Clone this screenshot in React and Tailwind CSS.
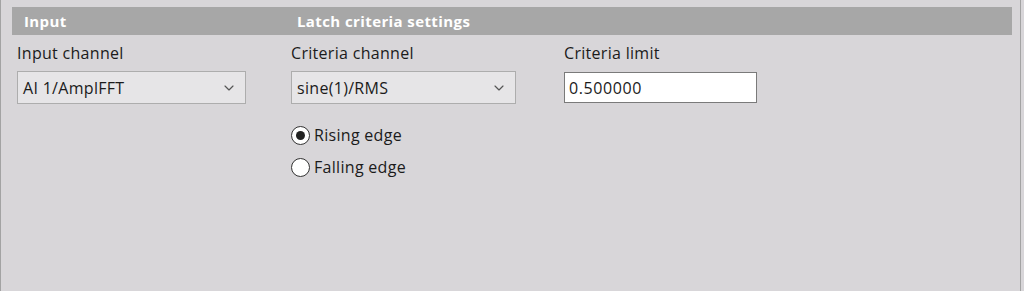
import { ChevronDown } from 'lucide-react';

function Select({ value, width }) {
  return (
    <div
      className={`flex items-center justify-between h-[33px] bg-[#e6e5e7] border border-[#adadad] pl-[5px] pr-[8px] ${width}`}
    >
      <span className="text-[16px] tracking-[0.3px] text-[#1b1b1b]">{value}</span>
      <ChevronDown className="w-[16px] h-[16px] text-[#555]" strokeWidth={1.75} />
    </div>
  );
}

function Radio({ label, checked }) {
  return (
    <div className="flex items-center gap-[4px] h-[32px]">
      <span className="w-[19px] h-[19px] rounded-full bg-white border border-[#333] flex items-center justify-center">
        {checked && <span className="w-[9px] h-[9px] rounded-full bg-[#222]" />}
      </span>
      <span className="text-[16px] tracking-[0.3px] text-[#1b1b1b]">{label}</span>
    </div>
  );
}

export default function App() {
  return (
    <div className="h-[291px] w-[1024px] bg-[#d8d6d9]" style={{ fontFamily: '"Open Sans", "Noto Sans", sans-serif' }}>
      <div className="h-full w-[1021px] border-l border-r border-[#a3a3a3] pt-[7px] pl-[11px]">
        {/* section header */}
        <div className="w-[1000px] h-[28px] bg-[#a7a7a7] grid grid-cols-[273px_273px_auto] items-center pl-[12px] text-white font-bold text-[15px] tracking-[0.4px]">
          <span>Input</span>
          <span>Latch criteria settings</span>
        </div>

        <div className="grid grid-cols-[274px_273px_auto] pl-[5px] mt-[8px]">
          <div>
            <div className="text-[16px] tracking-[0.3px] leading-[20px] text-[#1b1b1b]">Input channel</div>
            <div className="mt-[8px]">
              <Select value="AI 1/AmplFFT" width="w-[229px]" />
            </div>
          </div>

          <div>
            <div className="text-[16px] tracking-[0.3px] leading-[20px] text-[#1b1b1b]">Criteria channel</div>
            <div className="mt-[8px]">
              <Select value="sine(1)/RMS" width="w-[225px]" />
            </div>
            <div className="mt-[15px]">
              <Radio label="Rising edge" checked />
              <Radio label="Falling edge" />
            </div>
          </div>

          <div>
            <div className="text-[16px] tracking-[0.3px] leading-[20px] text-[#1b1b1b]">Criteria limit</div>
            <div className="mt-[9px] w-[193px] h-[31px] bg-white border border-[#7a7a7a] flex items-center pl-[4px]">
              <span className="text-[16px] tracking-[0.6px] text-[#1b1b1b]">0.500000</span>
            </div>
          </div>
        </div>
      </div>
    </div>
  );
}
